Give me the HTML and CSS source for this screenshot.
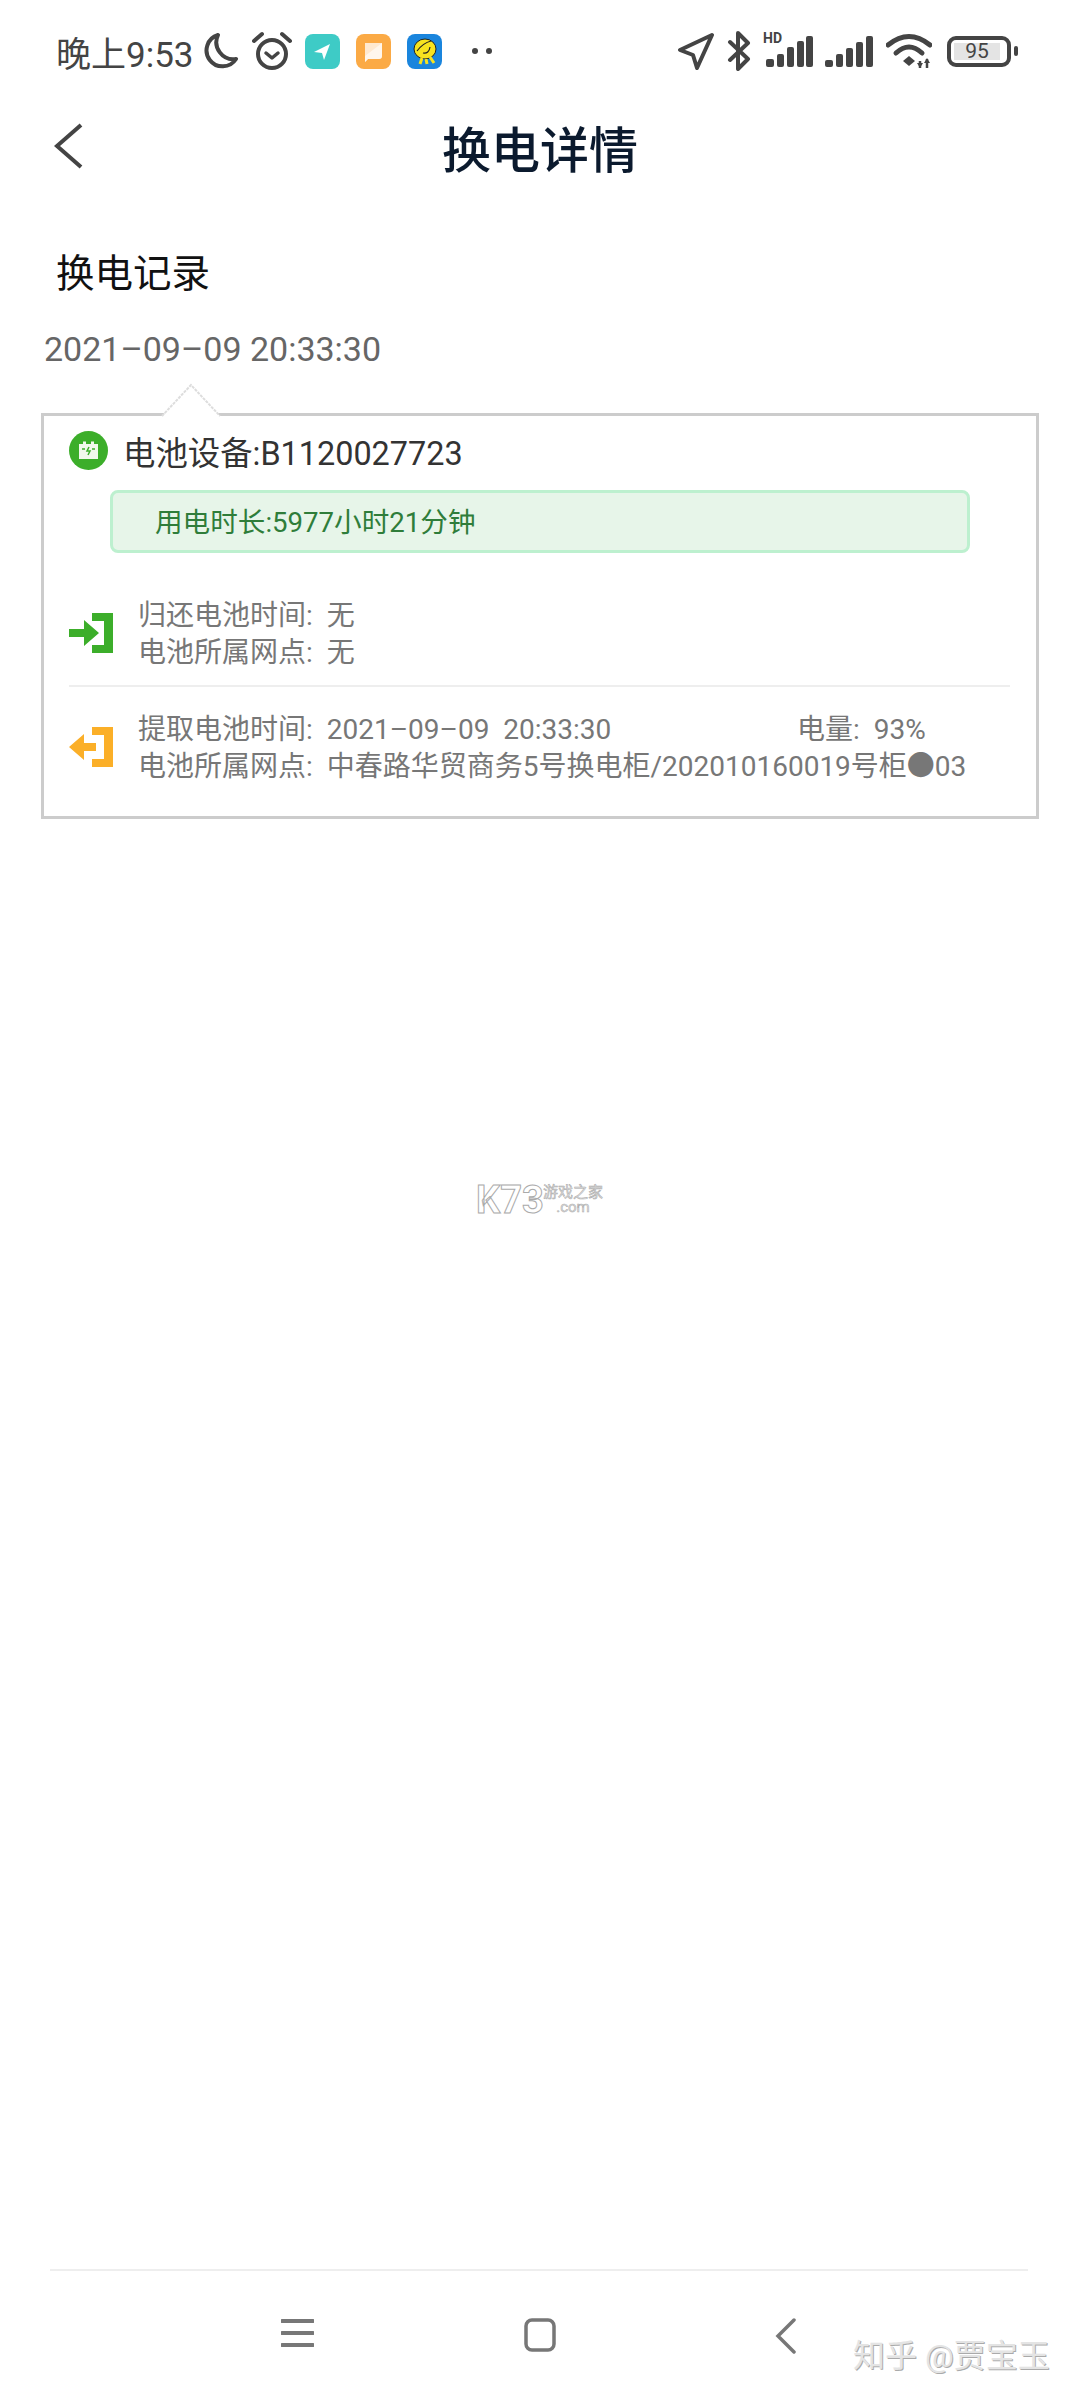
FILE: index.html
```html
<!DOCTYPE html>
<html lang="zh-CN">
  <head>
    <meta charset="UTF-8" />
    <meta name="viewport" content="width=device-width, initial-scale=1.0" />
    <title>换电详情</title>
    <link rel="stylesheet" href="styles.css">
  </head>
  <body>
    <div id="page">
      <!-- status bar -->
      <div class="status">
        <span class="time">晚上9:53</span>
        <svg class="moon" width="36" height="38" viewBox="0 0 36 38"><path d="M15 3 A16 16 0 1 0 33 27 A17 17 0 0 1 15 3 Z" fill="none" stroke="#444" stroke-width="4" stroke-linejoin="round"/></svg>
        <svg class="alarm" width="40" height="40" viewBox="0 0 40 40"><circle cx="20" cy="23" r="14" fill="none" stroke="#444" stroke-width="4"/><path d="M14 22l6 5 6-5" fill="none" stroke="#444" stroke-width="3.5" stroke-linecap="round" stroke-linejoin="round"/><path d="M2 10L10 3M38 10L30 3" stroke="#444" stroke-width="4" stroke-linecap="round"/></svg>
        <svg class="app" width="35" height="35" viewBox="0 0 35 35"><rect width="35" height="35" rx="8" fill="#3ecbc6"/><path d="M9 18L25 10L19 26L17 19Z" fill="#fff"/></svg>
        <svg class="app" width="35" height="35" viewBox="0 0 35 35"><rect width="35" height="35" rx="8" fill="#fbaa45"/><path d="M9 9H26V22Q26 25 23 25H12L9 28Z" fill="#ffe9d0"/><path d="M9 28V22L26 9V22Q26 25 23 25H12Z" fill="#fff" opacity=".6"/></svg>
        <svg class="app" width="35" height="35" viewBox="0 0 35 35"><rect width="35" height="35" rx="8" fill="#1a85dd"/><ellipse cx="18" cy="15" rx="11" ry="10" fill="#f7e31f" stroke="#222" stroke-width="1"/><path d="M15 24l-2 6M19 25l1 5M23 23l4 6" stroke="#f7e31f" stroke-width="3"/><path d="M10 17Q16 9 24 7M16 19Q22 20 23 13" fill="none" stroke="#222" stroke-width="1.2"/></svg>
        <span class="dots"><i></i><i></i></span>
        <span class="grow"></span>
        <svg class="arrow" width="38" height="38" viewBox="0 0 38 38"><path d="M35 3L3 18L16 23L20 36Z" fill="none" stroke="#444" stroke-width="4" stroke-linejoin="round"/></svg>
        <svg class="bt" width="24" height="40" viewBox="0 0 24 40"><path d="M3 11L21 28L11 38V2L21 12L3 29" fill="none" stroke="#444" stroke-width="4" stroke-linejoin="round" stroke-linecap="round"/></svg>
        <span class="hd-wrap">
          <span class="hd">HD</span>
          <svg width="50" height="34" viewBox="0 0 50 34"><rect x="3" y="25" width="8" height="8" rx="2" fill="#444"/><rect x="14" y="20" width="7" height="13" rx="2" fill="#444"/><rect x="24" y="13" width="7" height="20" rx="2" fill="#444"/><rect x="34" y="7" width="7" height="26" rx="2" fill="#444"/><rect x="43" y="2" width="7" height="31" rx="2" fill="#444"/></svg>
        </span>
        <svg class="sig" width="48" height="33" viewBox="0 0 48 33"><rect x="0" y="25" width="8" height="7" rx="2" fill="#444"/><rect x="11" y="19" width="7" height="13" rx="2" fill="#444"/><rect x="21" y="13" width="7" height="19" rx="2" fill="#444"/><rect x="31" y="7" width="7" height="25" rx="2" fill="#444"/><rect x="41" y="1" width="7" height="31" rx="2" fill="#444"/></svg>
        <svg class="wifi" width="46" height="36" viewBox="0 0 46 36"><path d="M2 12Q23 -5 44 12" fill="none" stroke="#444" stroke-width="5" stroke-linecap="round"/><path d="M10 20Q23 8 36 20" fill="none" stroke="#444" stroke-width="5" stroke-linecap="round"/><path d="M17 28L23 23L29 28L23 33Z" fill="#444"/><path d="M34 28V35M41 26V35" stroke="#444" stroke-width="2.5"/><path d="M31 30L34 35L37 30M38 30L41 25L44 30" fill="#444"/></svg>
        <span class="battery"><span class="batt-fill">95</span></span>
        <span class="batt-tip"></span>
      </div>

      <!-- title -->
      <div class="head">
        <svg class="back" width="30" height="46" viewBox="0 0 30 46"><path d="M27 2L3 23L27 44" fill="none" stroke="#444" stroke-width="4"/></svg>
        <h1>换电详情</h1>
      </div>

      <div class="sub-title">换电记录</div>
      <div class="date">2021–09–09 20:33:30</div>

      <div class="card">
        <svg class="notch" width="60" height="34" viewBox="0 0 60 34"><path d="M1 33L30 2L59 33" fill="#fff" stroke="#ddd" stroke-width="2" stroke-dasharray="3 1"/></svg>
        <div class="device">
          <svg width="39" height="39" viewBox="0 0 39 39"><circle cx="19.5" cy="19.5" r="19.5" fill="#3cae2a"/><path d="M10 13H14V10.5H17V13H22V10.5H25V13H29V28H10Z" fill="#f1f8ec"/><path d="M13 18H16M23 18H26M20 16L18 20H21L19 24" stroke="#3cae2a" stroke-width="1.5" fill="none"/></svg>
          <span>电池设备:B1120027723</span>
        </div>
        <div class="usage">用电时长:5977小时21分钟</div>

        <div class="row row-return">
          <svg width="46" height="46" viewBox="0 0 46 46"><path d="M23 3H44V43H23V35H35V11H23Z" fill="#3cae2a"/><path d="M0 19H15V10L30 23L15 36V27H0Z" fill="#3cae2a"/></svg>
          <div class="lines">
            <div>归还电池时间: 无</div>
            <div>电池所属网点: 无</div>
          </div>
        </div>
        <div class="line-sep"></div>
        <div class="row row-take">
          <svg width="46" height="46" viewBox="0 0 46 46"><path d="M23 3H44V43H23V35H35V11H23Z" fill="#fbaf28"/><path d="M27 19H15V10L0 23L15 36V27H27Z" fill="#fbaf28"/></svg>
          <div class="lines">
            <div class="first"><span class="take-time">提取电池时间: 2021–09–09 20:33:30</span><span>电量: 93%</span></div>
            <div>电池所属网点: 中春路华贸商务5号换电柜/202010160019号柜●03</div>
          </div>
        </div>
      </div>

      <div class="mark-k73">
        <span class="k73">K73</span>
        <span class="k73-side"><span>游戏之家</span><span>.com</span></span>
      </div>

      <div class="bottom">
        <svg width="33" height="30" viewBox="0 0 33 30"><path d="M1 3H32M1 15H32M1 27H32" stroke="#777" stroke-width="4" stroke-linecap="round"/></svg>
        <svg class="nav-home" width="32" height="34" viewBox="0 0 32 34"><rect x="2" y="2" width="28" height="30" rx="6" fill="none" stroke="#777" stroke-width="3.5"/></svg>
        <svg width="22" height="36" viewBox="0 0 22 36"><path d="M19 2L3 18L19 34" fill="none" stroke="#777" stroke-width="3.5" stroke-linecap="round"/></svg>
      </div>
      <div class="mark-zhihu">知乎 @贾宝玉</div>
    </div>
  </body>
</html>
```

FILE: styles.css
```css
* {
  box-sizing: border-box;
}
body {
  margin: 0;
  background: #fff;
  font-family: "Roboto", "Noto Sans CJK SC", sans-serif;
}
#page {
  position: relative;
  width: 1080px;
  height: 2400px;
  display: flex;
  flex-direction: column;
  overflow: hidden;
}

/* status bar */
.status {
  height: 106px;
  padding: 0 62px 4px 56px;
  display: flex;
  align-items: center;
  color: #444;
}
.time {
  font-size: 35px;
  width: 147px;
  white-space: nowrap;
}
.moon {
  margin-right: 13px;
}
.alarm {
  margin-right: 13px;
}
.app {
  margin-right: 16px;
}
.dots {
  display: flex;
  gap: 8px;
  margin-left: 14px;
}
.dots i {
  width: 6px;
  height: 6px;
  border-radius: 50%;
  background: #444;
}
.grow {
  flex: 1;
}
.arrow {
  margin-right: 12px;
}
.bt {
  margin-right: 12px;
}
.hd-wrap {
  position: relative;
  width: 50px;
  height: 34px;
  margin-right: 12px;
}
.hd-wrap svg {
  display: block;
}
.hd {
  position: absolute;
  left: 0;
  top: -3px;
  font-size: 14px;
  font-weight: 700;
  line-height: 14px;
  background: #fff;
}
.sig {
  margin-right: 13px;
}
.wifi {
  margin-right: 15px;
}
.battery {
  width: 64px;
  height: 31px;
  border: 4px solid #444;
  border-radius: 9px;
  padding: 3px;
}
.batt-fill {
  display: block;
  width: 46px;
  height: 17px;
  background: #e4e4e4;
  font-size: 21px;
  line-height: 17px;
  text-align: center;
  color: #444;
}
.batt-tip {
  width: 4px;
  height: 10px;
  margin-left: 3px;
  border-radius: 2px;
  background: #444;
}

/* title */
.head {
  position: relative;
  height: 80px;
  display: flex;
  align-items: center;
  justify-content: center;
}
.head h1 {
  margin: 0;
  font-size: 49px;
  font-weight: 500;
  color: #0b1a2e;
}
.back {
  position: absolute;
  left: 54px;
  top: 17px;
}
.sub-title {
  margin: 60px 0 0 56px;
  font-size: 38.5px;
  line-height: 56px;
  color: #111;
}
.date {
  margin: 22px 0 0 44px;
  font-size: 34px;
  line-height: 50px;
  color: #666;
}

/* card */
.card {
  position: relative;
  margin: 39px 41px 0;
  height: 406px;
  border: 3px solid #ccc;
  padding: 11px 25px 0;
}
.notch {
  position: absolute;
  left: 117px;
  top: -33px;
}
.device {
  display: flex;
  align-items: center;
  gap: 15px;
  font-size: 32.4px;
  color: #333;
}
.usage {
  margin: 16px 41px 0;
  height: 63px;
  width: 860px;
  padding-left: 42px;
  border: 3px solid #bdf0cf;
  border-radius: 8px;
  background: #e7f5e9;
  font-size: 27.6px;
  line-height: 59px;
  color: #2f7d3a;
}
.row {
  display: flex;
  align-items: center;
  gap: 23px;
  font-size: 28px;
  line-height: 37px;
  word-spacing: 7px;
  color: #777;
}
.row-return {
  margin-top: 44px;
}
.row-take {
  margin-top: 24px;
}
.row svg {
  flex: none;
  margin-top: -3px;
}
.take-time {
  display: inline-block;
  width: 659px;
}
.line-sep {
  margin-top: 14px;
  width: 941px;
  height: 2px;
  background: #eee;
}

/* watermarks */
.mark-k73 {
  position: absolute;
  left: 476px;
  top: 1178px;
  display: flex;
  align-items: center;
  gap: 3px;
}
.k73 {
  font-size: 38px;
  font-weight: 700;
  color: transparent;
  -webkit-text-stroke: 1px #aaa;
  display: inline-block;
  width: 64px;
  white-space: nowrap;
}
.k73-side {
  display: flex;
  flex-direction: column;
  align-items: center;
  font-size: 15px;
  line-height: 15px;
  color: #ddd;
  -webkit-text-stroke: 0.5px #aaa;
}
.mark-zhihu {
  position: absolute;
  left: 853px;
  top: 2336px;
  font-size: 32px;
  line-height: 40px;
  white-space: nowrap;
  color: #e4e4e4;
  text-shadow: 1px 1px 0 #aaa;
}

/* nav */
.bottom {
  margin: auto 52px 0 50px;
  height: 131px;
  border-top: 2px solid #eee;
  padding: 47px 231px 0;
  display: flex;
  justify-content: space-between;
  align-items: flex-start;
}
.nav-home {
  margin-right: 9px;
}
```
